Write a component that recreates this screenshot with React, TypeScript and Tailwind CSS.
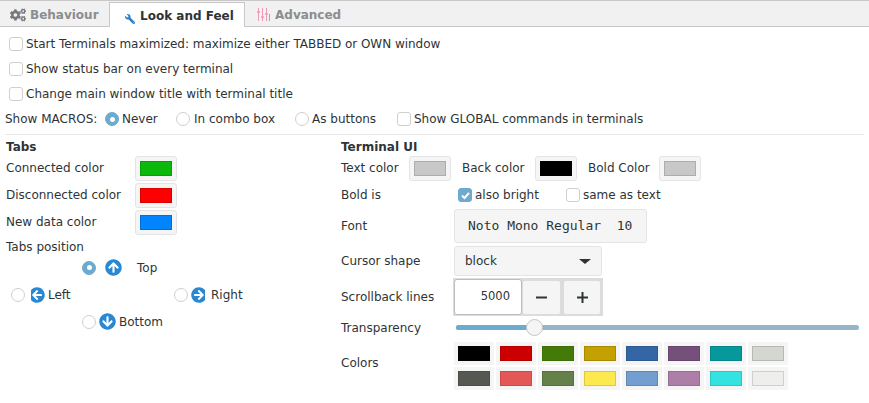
import React from 'react';
import { FaCogs, FaWrench, FaArrowCircleUp, FaArrowCircleDown, FaArrowCircleLeft, FaArrowCircleRight } from 'react-icons/fa';

const Check = ({ checked = false }: { checked?: boolean }) => (
  <span className={`flex h-[14px] w-[14px] shrink-0 items-center justify-center rounded-[3px] border ${checked ? 'border-[#6caad0] bg-[#6caad0]' : 'border-[#cfcfcf] bg-white'}`}>
    {checked && (
      <svg width="11" height="11" viewBox="0 0 11 11" fill="none"><path d="M2 5.5 L4.5 8 L9 3" stroke="#fff" strokeWidth="2" /></svg>
    )}
  </span>
);

const Radio = ({ checked = false }: { checked?: boolean }) => (
  <span className={`flex h-[14px] w-[14px] shrink-0 items-center justify-center rounded-full border ${checked ? 'border-[#6caad0] bg-[#6caad0]' : 'border-[#cfcfcf] bg-white'}`}>
    {checked && <span className="h-[5px] w-[5px] rounded-full bg-white" />}
  </span>
);

const Swatch = ({ color, edge }: { color: string; edge: string }) => (
  <span className="flex h-[25px] w-[42px] items-center justify-center rounded-[3px] border border-[#e4e4e4] bg-[#f5f5f5]">
    <span className="h-[15px] w-[32px] border" style={{ backgroundColor: color, borderColor: edge }} />
  </span>
);

const Palette = ({ color, edge }: { color: string; edge: string }) => (
  <span className="flex h-[23px] w-[40px] items-center justify-center bg-[#f5f5f5]">
    <span className="h-[15px] w-[32px] border" style={{ backgroundColor: color, borderColor: edge }} />
  </span>
);

const row1 = [
  ['#000000', '#000000'], ['#cc0000', '#b80000'], ['#447a08', '#3d6e07'], ['#c4a000', '#a88a00'],
  ['#3465a4', '#2e5a92'], ['#75507b', '#67466c'], ['#06989a', '#058688'], ['#d3d7cf', '#b6b9b2'],
];
const row2 = [
  ['#555753', '#4a4c48'], ['#e35757', '#c94c4c'], ['#658049', '#586f40'], ['#fce94f', '#e0c93a'],
  ['#729fcf', '#5f88b5'], ['#ad7fa8', '#966e92'], ['#34e2e2', '#2cc4c4'], ['#eeeeec', '#cfcfcd'],
];

const Advanced = () => (
  <svg width="15" height="15" viewBox="0 0 15 15" stroke="#f09ab9" strokeWidth="1" fill="none">
    <path d="M2.5 1V14M6.5 1V14M10.5 1V14" />
    <path d="M1 5H4M5 10H8M9 7H12" strokeWidth="1.5" />
    <path d="M13.5 7V14" stroke="#b9a0a8" />
  </svg>
);

export default function App() {
  return (
    <div className="h-[403px] w-[869px] overflow-hidden bg-white text-[12px] text-[#2e3436]" style={{ fontFamily: '"DejaVu Sans", sans-serif' }}>
      <div className="flex h-[27px] items-end border-y border-y-[#c8c8c8] bg-[#f1f1f1] pl-[4px] font-bold">
        <div className="flex h-[26px] w-[105px] items-center gap-[4px] pl-[6px] pt-[3px] text-[#8b8d8e]">
          <FaCogs size={16} className="text-[#77797a]" />
          <span>Behaviour</span>
        </div>
        <div className="z-10 -mb-px flex h-[25px] w-[136px] items-center gap-[5px] border border-b-0 border-[#c8c8c8] bg-white pl-[15px] pt-[2px] text-[#2e3436]">
          <FaWrench size={10} className="mt-[5px] -scale-x-100 text-[#2a7fc9]" />
          <span>Look and Feel</span>
        </div>
        <div className="flex h-[26px] items-center gap-[4px] pl-[11px] pt-[3px] text-[#8b8d8e]">
          <Advanced />
          <span>Advanced</span>
        </div>
      </div>

      <div className="flex flex-col px-[5px]">
        <label className="mt-[9px] flex h-[16px] items-center gap-[3px] pl-[4px]"><Check /><span className="tracking-[-0.03px]">Start Terminals maximized: maximize either TABBED or OWN window</span></label>
        <label className="mt-[9px] flex h-[16px] items-center gap-[3px] pl-[4px]"><Check /><span>Show status bar on every terminal</span></label>
        <label className="mt-[9px] flex h-[16px] items-center gap-[3px] pl-[4px]"><Check /><span>Change main window title with terminal title</span></label>
        <div className="mt-[9px] flex h-[16px] items-center">
          <span className="w-[100px]">Show MACROS:</span>
          <span className="flex w-[71px] items-center gap-[3px]"><Radio checked /><span>Never</span></span>
          <span className="flex w-[119px] items-center gap-[4px]"><Radio /><span>In combo box</span></span>
          <span className="flex w-[102px] items-center gap-[3px]"><Radio /><span>As buttons</span></span>
          <span className="flex items-center gap-[3px]"><Check /><span>Show GLOBAL commands in terminals</span></span>
        </div>
        <div className="mt-[7px] h-px w-[859px] bg-[#e6e6e6]" />

        <div className="flex pl-px">
          <section className="flex w-[335px] flex-col">
            <h3 className="mt-[4px] h-[16px] font-bold leading-[16px]">Tabs</h3>
            {[
              ['Connected color', '#0cb80c', '#0a9d0a'],
              ['Disconnected color', '#ff0000', '#d90000'],
              ['New data color', '#0084ff', '#0070d9'],
            ].map(([label, c, e], i) => (
              <div key={label} className={`flex h-[26px] items-center ${i === 0 ? '' : 'mt-[1px]'}`}>
                <span className="w-[129px]">{label}</span>
                <Swatch color={c} edge={e} />
              </div>
            ))}
            <div className="mt-[4px] h-[16px] leading-[16px]">Tabs position</div>
            <div className="-mt-px grid grid-cols-[71px_92px_auto] grid-rows-[27px_27px_27px] items-center pl-[5px]">
              <span />
              <span className="flex items-center">
                <Radio checked />
                <FaArrowCircleUp size={17} className="ml-[9px] text-[#2a87d2]" />
                <span className="ml-[15px]">Top</span>
              </span>
              <span />
              <span className="flex items-center">
                <Radio />
                <span className="ml-[6px] flex w-[14px] justify-end overflow-hidden">
                  <FaArrowCircleLeft size={16} className="shrink-0 text-[#2a87d2]" />
                </span>
                <span className="ml-[3px]">Left</span>
              </span>
              <span />
              <span className="flex items-center">
                <Radio />
                <span className="ml-[3px] flex w-[14px] overflow-hidden">
                  <FaArrowCircleRight size={16} className="shrink-0 text-[#2a87d2]" />
                </span>
                <span className="ml-[6px]">Right</span>
              </span>
              <span />
              <span className="flex items-center">
                <Radio />
                <FaArrowCircleDown size={17} className="ml-[3px] text-[#2a87d2]" />
                <span className="ml-[3px]">Bottom</span>
              </span>
              <span />
            </div>
          </section>

          <section className="flex flex-1 flex-col">
            <h3 className="mt-[4px] h-[16px] font-bold leading-[16px]">Terminal UI</h3>
            <div className="flex h-[26px] items-center">
              <span className="w-[68px]">Text color</span>
              <Swatch color="#c8c8c8" edge="#adadad" />
              <span className="ml-[11px] w-[73px]">Back color</span>
              <Swatch color="#000000" edge="#000000" />
              <span className="ml-[11px] w-[71px]">Bold Color</span>
              <Swatch color="#c8c8c8" edge="#adadad" />
            </div>
            <div className="mt-[1px] flex h-[26px] items-center">
              <span className="w-[117px]">Bold is</span>
              <Check checked />
              <span className="ml-[3px] w-[91px]">also bright</span>
              <Check />
              <span className="ml-[3px]">same as text</span>
            </div>
            <div className="mt-[1px] flex h-[34px] items-center">
              <span className="w-[113px]">Font</span>
              <span className="flex h-[34px] w-[193px] items-center rounded-[3px] border border-[#e4e4e4] bg-[#f5f5f5] pl-[13px] text-[13px]" style={{ fontFamily: '"DejaVu Sans Mono", monospace' }}>
                Noto Mono Regular&nbsp; 10
              </span>
            </div>
            <div className="mt-[3px] flex h-[30px] items-center">
              <span className="w-[113px]">Cursor shape</span>
              <span className="flex h-[30px] w-[148px] items-center justify-between rounded-[3px] border border-[#e4e4e4] bg-[#f5f5f5] pl-[10px] pr-[10px]">
                <span>block</span>
                <span className="h-0 w-0 border-x-[6px] border-t-[5px] border-x-transparent border-t-[#2e3436]" />
              </span>
            </div>
            <div className="mt-[2px] flex h-[38px] items-center">
              <span className="w-[112px]">Scrollback lines</span>
              <span className="flex h-[38px] w-[150px] items-center bg-[#dcdcdc] p-px">
                <span className="flex h-[36px] w-[68px] items-center justify-end rounded-[3px] border border-[#bdbdbd] bg-white pr-[11px] text-[11.5px]">5000</span>
                <span className="ml-[1px] flex h-[33px] w-[37px] items-center justify-center rounded-[2px] bg-[#f5f5f5] text-[20px] font-bold">
                  <svg width="11" height="11" viewBox="0 0 11 11"><path d="M0 5.5H11" stroke="#2e3436" strokeWidth="2" /></svg>
                </span>
                <span className="ml-[4px] flex h-[33px] w-[36px] items-center justify-center rounded-[2px] bg-[#f5f5f5]">
                  <svg width="11" height="11" viewBox="0 0 11 11"><path d="M0 5.5H11M5.5 0V11" stroke="#2e3436" strokeWidth="2" /></svg>
                </span>
              </span>
            </div>
            <div className="mt-px flex h-[20px] items-center">
              <span className="w-[115px] pt-px">Transparency</span>
              <span className="relative h-[5px] w-[403px] rounded-full bg-[#96b5c8]">
                <span className="absolute inset-y-0 left-0 w-[70px] rounded-l-full bg-[#6caad0]" />
                <span className="absolute left-[70px] top-[-6px] h-[17px] w-[17px] rounded-full border border-[#c4c4c4] bg-[#f5f5f5]" />
              </span>
            </div>
            <div className="mt-[5px] flex items-center">
              <span className="w-[113px] pb-[7px]">Colors</span>
              <div className="flex flex-col gap-[2px]">
                <div className="flex gap-[2px]">{row1.map(([c, e]) => <Palette key={c} color={c} edge={e} />)}</div>
                <div className="flex gap-[2px]">{row2.map(([c, e]) => <Palette key={c} color={c} edge={e} />)}</div>
              </div>
            </div>
          </section>
        </div>
      </div>
    </div>
  );
}
